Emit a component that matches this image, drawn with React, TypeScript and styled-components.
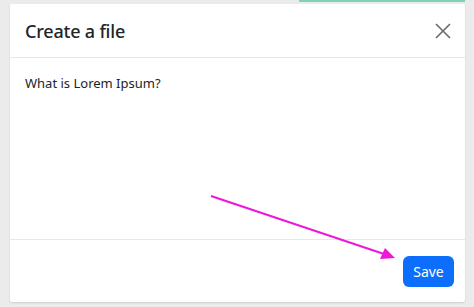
import React from "react";
import styled, { createGlobalStyle } from "styled-components";

const GlobalStyle = createGlobalStyle`
  html, body {
    margin: 0;
    padding: 0;
    background: #ebebeb;
    font-family: "Noto Sans", "Open Sans", sans-serif;
    color: #212529;
  }
`;

const Page = styled.div`
  position: relative;
  width: 474px;
  height: 307px;
  overflow: hidden;
`;

const TopStrip = styled.div`
  height: 2px;
  width: 166px;
  margin-left: 299px;
  background: #7fd3b0;
`;

const Modal = styled.div`
  margin: 2px 0 0 10px;
  width: 455px;
  height: 298px;
  background: #ffffff;
  border-radius: 2px;
  box-shadow: 0 1px 2px rgba(0, 0, 0, 0.12);
  display: flex;
  flex-direction: column;
`;

const Header = styled.div`
  height: 54px;
  box-sizing: border-box;
  padding: 0 10px 0 15px;
  display: flex;
  align-items: center;
  justify-content: space-between;
  border-bottom: 1px solid #e6e8ea;
`;

const Title = styled.h5`
  margin: 0;
  font-size: 18px;
  font-weight: 500;
  letter-spacing: -0.2px;
`;

const CloseButton = styled.button`
  width: 24px;
  height: 24px;
  padding: 0;
  border: none;
  background: none;
  display: flex;
  align-items: center;
  justify-content: center;
`;

const Body = styled.div`
  flex: 1;
  padding: 16px 15px;
  font-size: 13px;
`;

const Footer = styled.div`
  height: 63px;
  box-sizing: border-box;
  padding: 0 11px;
  display: flex;
  align-items: center;
  justify-content: flex-end;
  border-top: 1px solid #e6e8ea;
`;

const SaveButton = styled.button`
  width: 51px;
  height: 31px;
  border: none;
  border-radius: 6px;
  background: #0d6efd;
  color: #ffffff;
  font-family: inherit;
  font-size: 14px;
  margin-top: 1px;
`;

const Arrow = styled.svg`
  position: absolute;
  left: 0;
  top: 0;
  pointer-events: none;
`;

export default function App() {
  return (
    <Page>
      <GlobalStyle />
      <TopStrip />
      <Modal>
        <Header>
          <Title>Create a file</Title>
          <CloseButton aria-label="Close">
            <svg width="16" height="16" viewBox="0 0 16 16">
              <path d="M1 1L15 15M15 1L1 15" stroke="#6b6b6b" strokeWidth="1.6" fill="none" />
            </svg>
          </CloseButton>
        </Header>
        <Body>What is Lorem Ipsum?</Body>
        <Footer>
          <SaveButton>Save</SaveButton>
        </Footer>
      </Modal>
      <Arrow width="474" height="307" viewBox="0 0 474 307">
        <line x1="211" y1="196" x2="384" y2="254" stroke="#ee18d8" strokeWidth="2.2" />
        <path d="M395 258L380 259L385 248Z" fill="#ee18d8" />
      </Arrow>
    </Page>
  );
}
